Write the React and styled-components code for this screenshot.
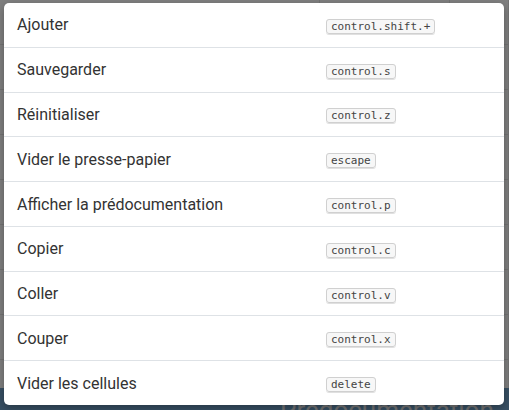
import styled, { createGlobalStyle } from 'styled-components';

const shortcuts = [
  { label: 'Ajouter', keys: 'control.shift.+' },
  { label: 'Sauvegarder', keys: 'control.s' },
  { label: 'Réinitialiser', keys: 'control.z' },
  { label: 'Vider le presse-papier', keys: 'escape' },
  { label: 'Afficher la prédocumentation', keys: 'control.p' },
  { label: 'Copier', keys: 'control.c' },
  { label: 'Coller', keys: 'control.v' },
  { label: 'Couper', keys: 'control.x' },
  { label: 'Vider les cellules', keys: 'delete' },
];

const GlobalStyle = createGlobalStyle`
  html, body {
    margin: 0;
    padding: 0;
    width: 509px;
    height: 410px;
    overflow: hidden;
    font-family: Roboto, "Liberation Sans", sans-serif;
  }
`;

const Page = styled.div`
  position: relative;
  width: 509px;
  height: 410px;
  display: flex;
  flex-direction: column;
  background: #fff;
  overflow: hidden;
`;

const Table = styled.div`
  flex: 1;
  min-height: 0;
  overflow: hidden;
  display: flex;
  flex-direction: column;
`;

const TableRow = styled.div`
  flex: none;
  height: 44px;
  display: grid;
  grid-template-columns: 320px 130px 1fr;
  border-bottom: 1px solid #e6e6e6;
  font-size: 15px;
  color: #333;

  span {
    padding: 12px 6px;
    border-right: 1px solid #e6e6e6;
  }
`;

const Footer = styled.div`
  flex: none;
  height: 22px;
  background: #6e9fc6;
  color: #e4e4e4;
  font-size: 26px;
  padding-left: 280px;
  line-height: 44px;
  overflow: hidden;
`;

const Overlay = styled.div`
  position: absolute;
  inset: 0;
  background: rgba(0, 0, 0, 0.5);
  display: flex;
  padding: 3px 5px 5px 4px;
`;

const Dialog = styled.div`
  flex: 1;
  background: #fff;
  border-radius: 5px;
  box-shadow: 0 3px 9px rgba(0, 0, 0, 0.3);
  display: flex;
  flex-direction: column;
  overflow: hidden;
`;

const Row = styled.div`
  flex: 1;
  display: grid;
  grid-template-columns: 309px 1fr;
  align-items: center;
  border-top: ${(p) => (p.$first ? 'none' : '1px solid #dee2e6')};
  padding: 0 13px;
`;

const Label = styled.div`
  font-size: 16px;
  color: #333;
`;

const Kbd = styled.kbd`
  justify-self: start;
  font-family: "DejaVu Sans Mono", "Liberation Mono", monospace;
  font-size: 11px;
  line-height: 16px;
  color: #444;
  background: #f7f7f7;
  border: 1px solid #d0d0d0;
  border-radius: 3px;
  box-shadow: 0 1px 0 rgba(0, 0, 0, 0.12);
  padding: 0 4px;
`;

export default function App() {
  return (
    <Page>
      <GlobalStyle />
      <Table>
        {Array.from({ length: 9 }).map((_, i) => (
          <TableRow key={i}>
            <span>{i % 2 ? '3' : 'C'}</span>
            <span />
            <span>M</span>
          </TableRow>
        ))}
      </Table>
      <Footer>Prédocumentation</Footer>
      <Overlay>
        <Dialog>
          {shortcuts.map((s, i) => (
            <Row key={s.label} $first={i === 0}>
              <Label>{s.label}</Label>
              <div>
                <Kbd>{s.keys}</Kbd>
              </div>
            </Row>
          ))}
        </Dialog>
      </Overlay>
    </Page>
  );
}
